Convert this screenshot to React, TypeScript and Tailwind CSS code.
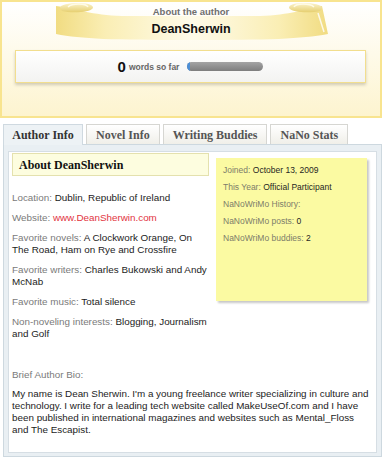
import { FC, ReactNode } from 'react'

const sans = { fontFamily: '"Liberation Sans", Arial, sans-serif' }
const serif = { fontFamily: '"Liberation Serif", "Times New Roman", serif' }

const Ribbon: FC = () => (
    <svg className="absolute left-0 top-0" width="380" height="46" viewBox="2 2 380 46">
        <defs>
            <linearGradient id="band" x1="0" y1="0" x2="1" y2="0">
                <stop offset="0" stopColor="#f1dc82" />
                <stop offset="0.18" stopColor="#faeeb4" />
                <stop offset="0.5" stopColor="#fefbea" />
                <stop offset="0.82" stopColor="#faeeb4" />
                <stop offset="1" stopColor="#f1dc82" />
            </linearGradient>
            <linearGradient id="curl" x1="0" y1="0" x2="0" y2="1">
                <stop offset="0" stopColor="#fbf3cc" />
                <stop offset="1" stopColor="#e6cf70" />
            </linearGradient>
        </defs>
        <path d="M56 6 C76 9 92 15 122 16 L260 16 C290 15 306 9 322 6 L328 34 C300 39 270 40 191 40 C112 40 82 39 56 34 Z" fill="url(#band)" />
        <path d="M60 8 C60 2 94 1 93 8 C90 13 70 13 62 11 Z" fill="url(#curl)" />
        <path d="M68 7 C72 3 86 3 88 7" fill="none" stroke="#fffbe6" strokeWidth="1.5" />
        <path d="M322 8 C322 2 288 1 289 8 C292 13 312 13 320 11 Z" fill="url(#curl)" />
        <path d="M314 7 C310 3 296 3 294 7" fill="none" stroke="#fffbe6" strokeWidth="1.5" />
        <path d="M318 13 L324 32" stroke="#ffffff" strokeWidth="1.5" opacity="0.8" />
    </svg>
)

const Row: FC<{ label: string; children?: ReactNode }> = ({ label, children }) => (
    <p className="mb-[8px] text-[9.85px] leading-[12px]">
        <span className="text-[#7a7a7a]">{label}: </span>
        <span className="text-[#1c1c1c]">{children}</span>
    </p>
)

const NoteRow: FC<{ label: string; value?: string }> = ({ label, value }) => (
    <p className="h-[17px] text-[8.5px] leading-[12px]">
        <span className="text-[#7d7d6a]">{label}:</span>
        {value && <span className="text-[#1f1f1f]"> {value}</span>}
    </p>
)

const tabs = ['Author Info', 'Novel Info', 'Writing Buddies', 'NaNo Stats']

export default function App() {
    return (
        <div className="h-[460px] w-[383px] overflow-hidden bg-white" style={sans}>
            {/* author banner */}
            <div className="relative h-[118px] w-[382px] border-2 border-[#f8e48f] bg-linear-to-b from-white to-[#fdf4cf]">
                <Ribbon />
                <div className="relative pt-[4px] text-center">
                    <div className="text-[9.5px] font-bold leading-[12px] text-[#6f6f6f]">About the author</div>
                    <div className="mt-[3px] text-[12.5px] font-bold leading-[16px] text-[#111]">DeanSherwin</div>
                </div>
                <div className="relative ml-[13px] mt-[13px] flex h-[33px] w-[351px] items-center justify-center border border-[#f2de8e] bg-linear-to-b from-white to-[#f3f3f1] shadow-[0_2px_3px_rgba(0,0,0,0.18)]">
                    <span className="text-[15px] font-bold leading-none text-[#111]">0</span>
                    <span className="ml-[3px] mt-[2px] text-[8.5px] font-bold text-[#666]">words so far</span>
                    <div className="ml-[8px] flex h-[9px] w-[76px] overflow-hidden rounded-full bg-linear-to-b from-[#a4a4a4] to-[#7e7e7e]">
                        <div className="h-full w-[3px] bg-[#4d8fd6]" />
                    </div>
                </div>
            </div>

            {/* tabs */}
            <div className="mt-[6px] flex items-end gap-[3px] pl-[3px]">
                {tabs.map((t, i) =>
                    i === 0 ? (
                        <div
                            key={t}
                            className="relative z-10 -mb-px flex h-[21px] w-[80px] items-center justify-center border border-b-0 border-[#cfd9e0] bg-[#edf2f5] text-[12px] font-bold text-[#333]"
                            style={serif}
                        >
                            {t}
                        </div>
                    ) : (
                        <div
                            key={t}
                            className="flex h-[20px] items-center border border-b-0 border-[#d6d6d2] bg-linear-to-b from-white to-[#f0efe9] px-[9px] text-[12px] font-bold text-[#555]"
                            style={serif}
                        >
                            {t}
                        </div>
                    )
                )}
            </div>

            {/* tab content */}
            <div className="ml-[3px] h-[313px] w-[379px] border border-[#cdd8df] bg-[#e9eff3] px-[4px] pt-[6px]">
                <div className="h-[302px] border border-[#d6dee4] bg-white px-[3px] pt-px">
                    <div className="flex">
                        <div className="w-[197px]">
                            <div
                                className="flex h-[23px] items-center border border-[#e4e1ae] bg-[#fdfddf] px-[6px] text-[12px] font-bold text-[#111]"
                                style={serif}
                            >
                                About DeanSherwin
                            </div>
                            <div className="mt-[16px]">
                                <Row label="Location">Dublin, Republic of Ireland</Row>
                                <Row label="Website">
                                    <span className="text-[#e2343e]">www.DeanSherwin.com</span>
                                </Row>
                                <Row label="Favorite novels">A Clockwork Orange, On The Road, Ham on Rye and Crossfire</Row>
                                <Row label="Favorite writers">Charles Bukowski and Andy McNab</Row>
                                <Row label="Favorite music">Total silence</Row>
                                <Row label="Non-noveling interests">Blogging, Journalism and Golf</Row>
                            </div>
                        </div>
                        <div className="ml-[7px] mt-[5px] h-[143px] w-[151px] bg-[#fbfaa2] px-[7px] pt-[6px] shadow-[2px_2px_2px_rgba(0,0,0,0.22)]">
                            <NoteRow label="Joined" value="October 13, 2009" />
                            <NoteRow label="This Year" value="Official Participant" />
                            <NoteRow label="NaNoWriMo History" />
                            <NoteRow label="NaNoWriMo posts" value="0" />
                            <NoteRow label="NaNoWriMo buddies" value="2" />
                        </div>
                    </div>
                    <p className="mt-[21px] text-[9.85px] leading-[12px] text-[#7a7a7a]">Brief Author Bio:</p>
                    <p className="mt-[7px] pr-[4px] text-[9.85px] leading-[12px] text-[#1c1c1c]">
                        My name is Dean Sherwin. I'm a young freelance writer specializing in culture and technology. I write for a leading tech website called MakeUseOf.com and I have been published in international magazines and websites such as Mental_Floss and The Escapist.
                    </p>
                </div>
            </div>
        </div>
    )
}
